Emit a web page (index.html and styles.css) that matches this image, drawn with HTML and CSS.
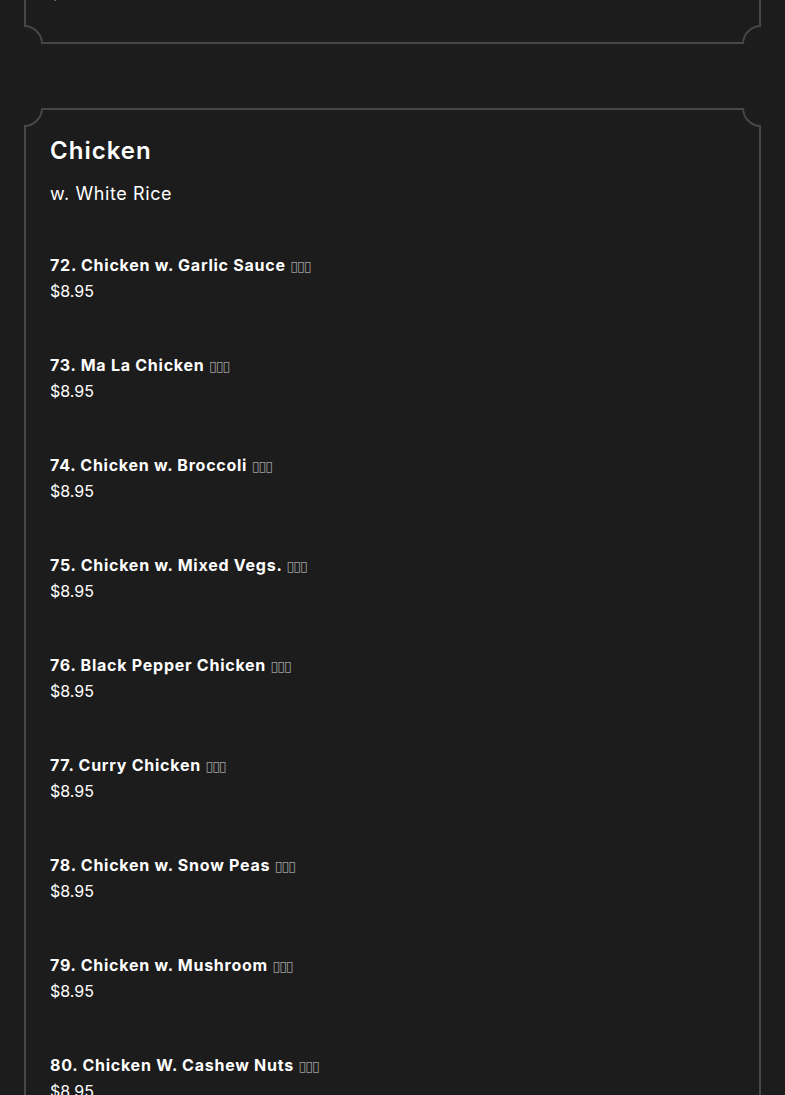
FILE: index.html
```html
<!DOCTYPE html>
<html lang="en">
<head>
<meta charset="utf-8">
<title>Menu - Chicken</title>
<link rel="stylesheet" href="styles.css">
</head>
<body>
<div class="menu">
  <section class="card card-prev">
    <span class="corner tl"><i></i></span><span class="corner tr"><i></i></span>
    <span class="corner bl"><i></i></span><span class="corner br"><i></i></span>
    <div class="item">
      <div class="name">71. Chicken w. String Beans <span class="cjk">▯▯▯</span></div>
      <div class="price">$8.95</div>
    </div>
  </section>

  <section class="card">
    <span class="corner tl"><i></i></span><span class="corner tr"><i></i></span>
    <span class="corner bl"><i></i></span><span class="corner br"><i></i></span>
    <h2 class="title">Chicken</h2>
    <p class="subtitle">w. White Rice</p>
    <div class="items">
      <div class="item"><div class="name">72. Chicken w. Garlic Sauce <span class="cjk">▯▯▯</span></div><div class="price">$8.95</div></div>
      <div class="item"><div class="name">73. Ma La Chicken <span class="cjk">▯▯▯</span></div><div class="price">$8.95</div></div>
      <div class="item"><div class="name">74. Chicken w. Broccoli <span class="cjk">▯▯▯</span></div><div class="price">$8.95</div></div>
      <div class="item"><div class="name">75. Chicken w. Mixed Vegs. <span class="cjk">▯▯▯</span></div><div class="price">$8.95</div></div>
      <div class="item"><div class="name">76. Black Pepper Chicken <span class="cjk">▯▯▯</span></div><div class="price">$8.95</div></div>
      <div class="item"><div class="name">77. Curry Chicken <span class="cjk">▯▯▯</span></div><div class="price">$8.95</div></div>
      <div class="item"><div class="name">78. Chicken w. Snow Peas <span class="cjk">▯▯▯</span></div><div class="price">$8.95</div></div>
      <div class="item"><div class="name">79. Chicken w. Mushroom <span class="cjk">▯▯▯</span></div><div class="price">$8.95</div></div>
      <div class="item"><div class="name">80. Chicken W. Cashew Nuts <span class="cjk">▯▯▯</span></div><div class="price">$8.95</div></div>
      <div class="item"><div class="name">81. Kung Pao Chicken <span class="cjk">▯▯▯</span></div><div class="price">$8.95</div></div>
    </div>
  </section>
</div>
</body>
</html>
```

FILE: styles.css
```css
html, body {
  margin: 0;
  padding: 0;
  background: #1c1c1c;
}
body {
  font-family: Inter, "Noto Sans", "DejaVu Sans", sans-serif;
  color: #ffffff;
  overflow: hidden;
}
.menu {
  padding: 0 24px;
}
.card {
  position: relative;
  border: 2px solid #474747;
  padding: 26px 24px 36px;
}
.card-prev {
  margin-top: -48px;
  padding-top: 0;
}
.card + .card {
  margin-top: 64px;
}
.corner {
  position: absolute;
  width: 19px;
  height: 19px;
  overflow: hidden;
  background: #1c1c1c;
}
.corner i {
  position: absolute;
  width: 38px;
  height: 38px;
  box-sizing: border-box;
  border: 2px solid #474747;
  border-radius: 50%;
}
.corner.tl { top: -2px; left: -2px; }
.corner.tl i { top: -19px; left: -19px; }
.corner.tr { top: -2px; right: -2px; }
.corner.tr i { top: -19px; right: -19px; }
.corner.bl { bottom: -2px; left: -2px; }
.corner.bl i { bottom: -19px; left: -19px; }
.corner.br { bottom: -2px; right: -2px; }
.corner.br i { bottom: -19px; right: -19px; }

.title {
  margin: 0;
  font-size: 24px;
  line-height: 30px;
  font-weight: 600;
  letter-spacing: 1px;
}
.subtitle {
  margin: 14px 0 0;
  font-size: 18px;
  line-height: 28px;
  font-weight: 400;
  letter-spacing: 0.6px;
}
.items {
  margin-top: 44px;
}
.item {
  margin-bottom: 48px;
}
.card-prev .item {
  margin-bottom: 0;
}
.name {
  font-size: 16px;
  line-height: 26px;
  font-weight: 700;
  letter-spacing: 0.75px;
}
.price {
  font-size: 16px;
  line-height: 26px;
  font-weight: 400;
}
.cjk {
  font-family: "DejaVu Sans", sans-serif;
  font-weight: 400;
  font-size: 14px;
  line-height: 0;
  color: #a0a0a0;
  letter-spacing: -1px;
}
```
